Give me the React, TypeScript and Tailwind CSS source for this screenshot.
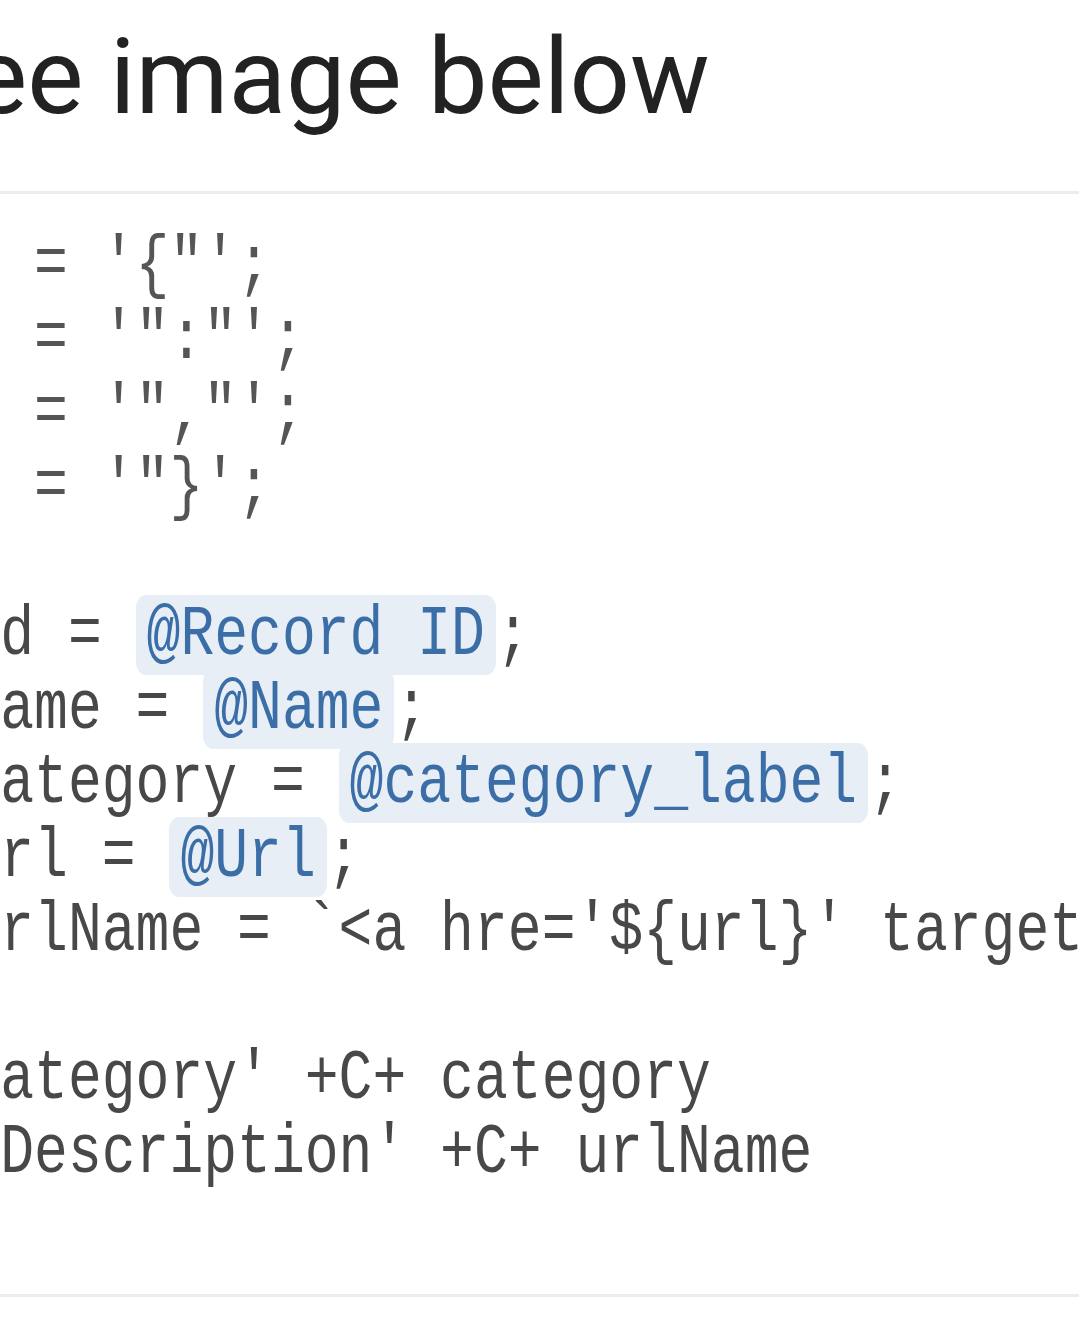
type Part = { text: string; token?: boolean }

// every line keeps its hidden 5-char prefix, the viewport cuts it off on the left
const lines: Part[][] = [
  [{ text: `let O = '{"';` }],
  [{ text: `let C = '":"';` }],
  [{ text: `let S = '","';` }],
  [{ text: `let E = '"}';` }],
  [],
  [{ text: 'let id = ' }, { text: '@Record ID', token: true }, { text: ';' }],
  [{ text: 'let name = ' }, { text: '@Name', token: true }, { text: ';' }],
  [{ text: 'let category = ' }, { text: '@category_label', token: true }, { text: ';' }],
  [{ text: 'let url = ' }, { text: '@Url', token: true }, { text: ';' }],
  [{ text: "let urlName = `<a hre='${url}' target='_blank'>${name}</a>`;" }],
  [],
  [{ text: " O+'category' +C+ category" }],
  [{ text: "  S+'Description' +C+ urlName" }],
]

function CodeLine({ parts, faded }: { parts: Part[]; faded: boolean }) {
  return (
    <div
      className={`h-[74px] leading-[74px] whitespace-pre -ml-[169px] scale-y-125 ${
        faded ? 'text-[#555555]' : 'text-[#484848]'
      }`}
    >
      {parts.length === 0 && ' '}
      {parts.map((p, i) =>
        p.token ? (
          <span key={i} className="bg-[#e7eef6] text-[#3b6ea6] px-[11px] rounded-[10px]">
            {p.text}
          </span>
        ) : (
          <span key={i}>{p.text}</span>
        )
      )}
    </div>
  )
}

export default function App() {
  return (
    <div className="w-[1079px] h-[1335px] overflow-hidden bg-white">
      <div className="h-[191px] pt-[24px] overflow-hidden">
        <h1
          className="text-[106px] leading-none font-normal text-[#222222] whitespace-pre -ml-[92px]"
          style={{ fontFamily: 'Roboto, "Noto Sans", sans-serif' }}
        >
          See image below
        </h1>
      </div>
      <div className="h-[3px] bg-[#ececec]" />
      <div
        className="pt-[34px] h-[1100px] overflow-hidden text-[56.4px]"
        style={{ fontFamily: '"Liberation Mono", monospace' }}
      >
        {lines.map((parts, i) => (
          <CodeLine key={i} parts={parts} faded={i < 4} />
        ))}
      </div>
      <div className="h-[3px] bg-[#ececec]" />
    </div>
  )
}
